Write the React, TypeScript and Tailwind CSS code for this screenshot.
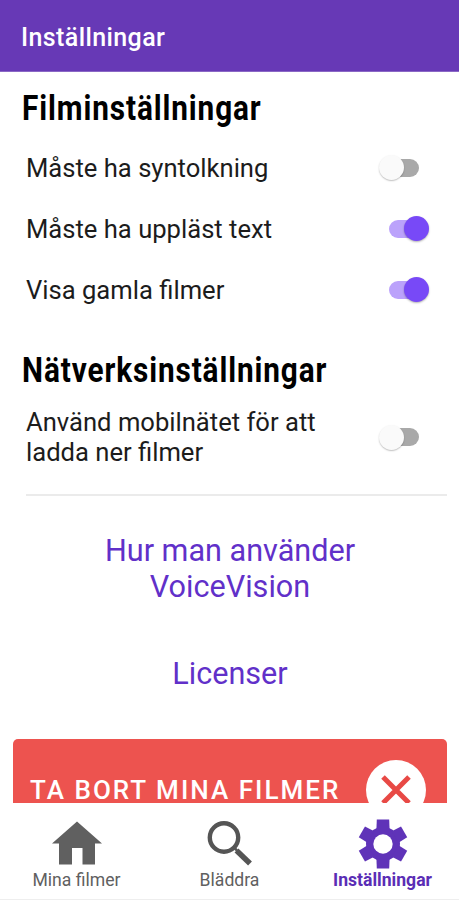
import type { ReactNode } from "react";

function Heading({ children }: { children: ReactNode }) {
  return (
    <h2 className="ml-[21.500px] h-[42px] w-max origin-left scale-x-[0.85] whitespace-nowrap text-[35px] leading-[42px] font-bold tracking-[1.05px] text-black">
      {children}
    </h2>
  );
}

function Toggle({ on }: { on: boolean }) {
  return on ? (
    <span className="mr-[30px] flex h-[26px] w-[40px] items-center rounded-full">
      <span className="h-[18px] w-[28px] shrink-0 rounded-l-full bg-[#bba2fb]" />
      <span className="-ml-[13px] h-[25px] w-[25px] shrink-0 rounded-full bg-[#7849f7] shadow-[0_1px_2px_rgba(0,0,0,0.3)]" />
    </span>
  ) : (
    <span className="mr-[40px] flex h-[26px] w-[40px] items-center rounded-full">
      <span className="z-10 h-[25px] w-[25px] shrink-0 rounded-full bg-[#fafafa] shadow-[0_1px_1.500px_rgba(0,0,0,0.25)]" />
      <span className="-ml-[13px] h-[18px] w-[28px] shrink-0 rounded-r-full bg-[#a9a9a9]" />
    </span>
  );
}

function Row({ label, on }: { label: string; on: boolean }) {
  return (
    <div className="flex h-[61px] items-center justify-between pl-[26px]">
      <span className="text-[25.6px] leading-[30px] whitespace-nowrap text-[#1c1c1c]">{label}</span>
      <Toggle on={on} />
    </div>
  );
}

const gearAngles = [0, 60, 120, 180, 240, 300];

export default function App() {
  return (
    <div className="flex h-[900px] w-[459px] flex-col overflow-hidden bg-white font-['Roboto',sans-serif]">
      <header className="flex h-[72px] shrink-0 items-center border-b border-[#8a68c5] bg-[#6739b6] pl-[21px]">
        <h1 className="mt-[4px] text-[25px] leading-[30px] font-medium tracking-[0.4px] whitespace-nowrap text-white">
          Inställningar
        </h1>
      </header>
      <main className="flex h-[731px] shrink-0 flex-col overflow-hidden">
        <div className="pt-[16px]">
          <Heading>Filminställningar</Heading>
        </div>
        <div className="pt-[7px]">
          <Row label="Måste ha syntolkning" on={false} />
          <Row label="Måste ha uppläst text" on />
          <Row label="Visa gamla filmer" on />
        </div>
        <div className="pt-[30px]">
          <Heading>Nätverksinställningar</Heading>
        </div>
        <div className="mt-[15px] flex h-[60px] items-center justify-between pl-[26px]">
          <p className="text-[25.6px] leading-[30px] text-[#1c1c1c]">
            Använd mobilnätet för att
            <br />
            ladda ner filmer
          </p>
          <Toggle on={false} />
        </div>
        <hr className="mt-[27px] mr-[12px] ml-[26px] border-t-2 border-[#ebebeb]" />
        <div className="mt-[37px] pl-[1px] text-center text-[30.6px] leading-[36px] text-[#6130c9]">
          <p>
            Hur man använder
            <br />
            VoiceVision
          </p>
          <p className="mt-[51px]">Licenser</p>
        </div>
        <button className="mt-[47px] mr-[12px] ml-[13px] flex h-[101px] shrink-0 items-center justify-between rounded-[5px] bg-[#ed534f] pr-[21px] pl-[17px]">
          <span className="text-[26px] leading-[30px] font-medium tracking-[2.03px] whitespace-nowrap text-white">
            TA BORT MINA FILMER
          </span>
          <span className="flex h-[60px] w-[60px] items-center justify-center rounded-full bg-white">
            <svg width="30" height="30" viewBox="0 0 30 30" fill="none" stroke="#e84945" strokeWidth="5">
              <path d="M2 2 28 28M28 2 2 28" />
            </svg>
          </span>
        </button>
      </main>
      <nav className="flex h-[97px] shrink-0 border-b border-[#eeeeee] bg-white text-[17.6px] leading-[22px] text-[#606060]">
        <a className="flex w-[153px] flex-col items-center pt-[16px]">
          <svg width="50" height="50" viewBox="0 0 50 50" fill="#606060">
            <path d="M25 2.500 50 24.500H43V45.500H30.500V29H20V45.500H7V24.500H0Z" />
          </svg>
          <span>Mina filmer</span>
        </a>
        <a className="flex w-[153px] flex-col items-center pt-[16px]">
          <svg width="46" height="50" viewBox="0 0 46 50" fill="none" stroke="#555555">
            <circle cx="17" cy="18.500" r="14.200" strokeWidth="4.400" />
            <path d="M26.500 28 30 31.500" strokeWidth="2.500" />
            <path d="M29.500 31.500 43 44.500" strokeWidth="5.500" />
          </svg>
          <span>Bläddra</span>
        </a>
        <a className="flex w-[153px] flex-col items-center pt-[16px] font-bold text-[#5a2db5]">
          <svg width="50" height="50" viewBox="-25 -25 50 50" fill="#5f33b8">
            <circle r="17" />
            {gearAngles.map((a) => (
              <path key={a} d="M-6.200 -24.400H6.200L6.600 -14H-6.600Z" transform={`rotate(${a})`} />
            ))}
            <circle r="9.700" fill="#ffffff" />
          </svg>
          <span>Inställningar</span>
        </a>
      </nav>
    </div>
  );
}
